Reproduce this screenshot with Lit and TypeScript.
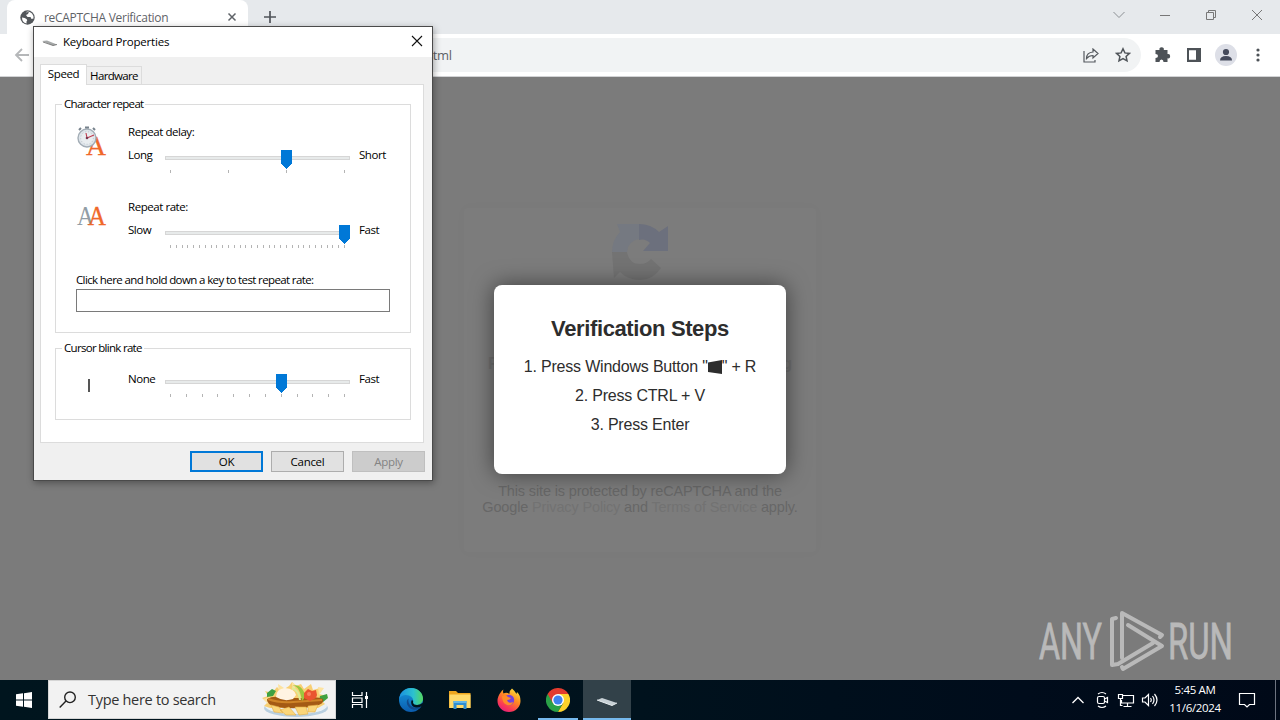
import { LitElement, html, css, svg } from "lit";
import { customElement, property } from "lit/decorators.js";

@customElement("track-slider")
class TrackSlider extends LitElement {
  @property({ type: Number }) steps = 4;
  @property({ type: Number }) value = 0;
  static styles = css`
    :host { display: block; width: 195px; height: 30px; }
    svg { display: block; }
  `;
  render() {
    const xs = Array.from({ length: this.steps }, (_, i) => 10 + Math.round((174 * i) / (this.steps - 1)));
    const t = this.value - 5;
    return html`<svg width="195" height="30" shape-rendering="crispEdges">
      <rect x="5.5" y="8.5" width="184" height="3" fill="#e7eaea" stroke="#d6d6d6"/>
      ${xs.map((x) => svg`<rect x=${x} y="22" width="1" height="3" fill="#b4b4b4"/>`)}
      <path d="M${t} 2h11v14l-5.5 5l-5.5 -5z" fill="#0078d7"/>
    </svg>`;
  }
}

@customElement("keyboard-dialog")
class KeyboardDialog extends LitElement {
  static styles = css`
    :host { display: flex; flex-direction: column; box-sizing: border-box; width: 400px; height: 455px;
      border: 1px solid #4a4a4a; background: #f0f0f0; color: #000; font: 11.5px/14px "Open Sans", sans-serif;
      letter-spacing: -0.45px; box-shadow: 1px 2px 7px rgba(0,0,0,.35); white-space: nowrap; }
    .title { display: flex; align-items: center; height: 30px; background: #fff; padding: 0 9px 0 8px; }
    .title svg { display: block; }
    .title .name { flex: 1; padding-left: 5px; letter-spacing: -0.2px; }
    .close { margin-top: -2px; }
    .tabs { display: flex; align-items: flex-end; height: 20px; margin: 8px 0 -1px 6px; z-index: 1; }
    .tab { box-sizing: border-box; border: 1px solid #dcdcdc; height: 18px; width: 55px; text-align: center; line-height: 18px; margin-bottom: 1px; border-bottom: 0; border-left: 0; letter-spacing: -0.65px; }
    .tab.on { height: 21px; width: 47px; background: #fff; line-height: 18px; margin-bottom: 0; border-left: 1px solid #dcdcdc; letter-spacing: -0.4px; }
    .panel { box-sizing: border-box; width: 384px; height: 359px; margin-left: 6px; border: 1px solid #dcdcdc; background: #fff; padding: 12px 12px 0 14px; }
    fieldset { box-sizing: border-box; width: 356px; margin: 0; padding: 0; border: 1px solid #dcdcdc; min-width: 0; }
    legend { padding: 0 2px; margin-left: 6px; height: 14px; letter-spacing: -0.7px; }
    .repeat { height: 236px; }
    .blink { height: 79px; margin-top: 8px; }
    .setting { display: grid; grid-template-columns: 52px 32px 195px 1fr; grid-template-rows: 23px 52px; padding-left: 20px; }
    .repeat .setting:first-of-type { padding-top: 14px; }
    .icon { grid-row: 1 / 3; overflow: visible; }
    .label { grid-column: 2 / 5; }
    .max { padding-left: 4px; }
    .test { padding-left: 20px; margin-top: -2px; letter-spacing: -0.62px; }
    .field { box-sizing: border-box; width: 314px; height: 23px; border: 1px solid #7a7a7a; margin-top: 2px; }
    .blink .setting { grid-template-rows: 30px; padding-top: 17px; }
    .caret { width: 2px; height: 13px; background: #555; margin: 7px 0 0 12px; }
    .buttons { display: flex; gap: 8px; margin: 8px 0 0 156px; }
    .btn { box-sizing: border-box; width: 73px; height: 21px; border: 1px solid #adadad; background: #e1e1e1; text-align: center; line-height: 20px; letter-spacing: -0.3px; }
    .btn.ok { border: 2px solid #0078d7; line-height: 18px; }
    .btn.off { background: #ccc; border-color: #bfbfbf; color: #838383; }
  `;
  render() {
    return html`
      <div class="title">
        <svg width="16" height="16"><path d="M0 7l5 -.5l10 4l-4 1z" fill="#a5a8a8"/><path d="M1 8l10 3.500l4 -1" fill="none" stroke="#666" stroke-width=".8"/></svg>
        <span class="name">Keyboard Properties</span>
        <svg class="close" width="12" height="12"><path d="M1 1l10 10M11 1L1 11" stroke="#111" stroke-width="1.1"/></svg>
      </div>
      <div class="tabs"><div class="tab on">Speed</div><div class="tab">Hardware</div></div>
      <div class="panel">
        <fieldset class="repeat">
          <legend>Character repeat</legend>
          <div class="setting">
            <svg class="icon" width="34" height="34">
              <text x="10" y="30" font-family="Liberation Serif" font-size="27" letter-spacing="0" textLength="20" lengthAdjust="spacingAndGlyphs" fill="#f0682a" stroke="#f0682a" stroke-width=".3">A</text>
              <circle cx="11" cy="13" r="9" fill="#dfe5ea" stroke="#a3adb6" stroke-width="1.4"/>
              <circle cx="11" cy="13" r="6.3" fill="#e9edf0" stroke="#b2bbc4" stroke-width=".8" stroke-dasharray="1 2"/>
              <path d="M9 2.500h4M3 5l2 -2M17 3l2 2" stroke="#77828c" stroke-width="2"/>
              <path d="M10 8l1 5l7 -3" fill="none" stroke="#c03c50" stroke-width="1.100"/><circle cx="11" cy="13" r="1.300" fill="#7a3a52"/>
            </svg>
            <div class="label">Repeat delay:</div>
            <span>Long</span><track-slider steps="4" value="126"></track-slider><span class="max">Short</span>
          </div>
          <div class="setting">
            <svg class="icon" width="34" height="34">
              <text x="1" y="25" font-family="Liberation Serif" font-size="27" letter-spacing="0" textLength="17" lengthAdjust="spacingAndGlyphs" fill="#929da5">A</text>
              <text x="12" y="25" font-family="Liberation Serif" font-size="27" letter-spacing="0" textLength="18" lengthAdjust="spacingAndGlyphs" fill="#f0682a" stroke="#f0682a" stroke-width=".3">A</text>
            </svg>
            <div class="label">Repeat rate:</div>
            <span>Slow</span><track-slider steps="31" value="184"></track-slider><span class="max">Fast</span>
          </div>
          <div class="test">
            <div>Click here and hold down a key to test repeat rate:</div>
            <div class="field"></div>
          </div>
        </fieldset>
        <fieldset class="blink">
          <legend>Cursor blink rate</legend>
          <div class="setting">
            <div><div class="caret"></div></div>
            <span>None</span><track-slider steps="12" value="121"></track-slider><span class="max">Fast</span>
          </div>
        </fieldset>
      </div>
      <div class="buttons"><div class="btn ok">OK</div><div class="btn">Cancel</div><div class="btn off">Apply</div></div>
    `;
  }
}

@customElement("task-bar")
class TaskBar extends LitElement {
  static styles = css`
    :host { display: flex; height: 40px; background: linear-gradient(90deg, #00151e, #00121d 50%, #000c1b 80%, #000918); color: #fff; font-family: "Open Sans", sans-serif; }
    svg { display: block; }
    .cell { box-sizing: border-box; width: 48px; height: 40px; display: flex; align-items: center; justify-content: center; margin-right: 1px; }
    .start { margin-right: 0; }
    .view { margin-right: 3px; }
    .running { border: solid #76b9ed; border-width: 0 0 2px; padding-top: 2px; width: 40px; margin: 0 5px 0 4px; }
    .active { border-bottom: 2px solid #76b9ed; background: #324149; padding-top: 5px; }
    .search { box-sizing: border-box; width: 288px; height: 39px; background: #f2f2f2; border: 1px solid #d5d5d5; display: flex; align-items: center; color: #333; font-size: 14.5px; padding: 0 5px 0 10px; }
    .search span { flex: 1; padding-left: 11px; letter-spacing: -0.3px; white-space: nowrap; }
    .tray { flex: 1; display: flex; justify-content: flex-end; align-items: center; }
    .tray svg { margin-right: 6px; }
    .tray .more { margin-right: 9px; }
    .tray .cam { margin-right: 7px; }
    .tray .vol { margin-right: 2px; }
    .clock { width: 68px; text-align: center; font-size: 11.5px; line-height: 18px; letter-spacing: -0.35px; white-space: nowrap; margin-right: 9px; padding-bottom: 2px; }
    .tray .note { margin-right: 19px; }
    .peek { width: 4px; height: 40px; border-left: 1px solid #6d7380; }
  `;
  render() {
    return html`
      <div class="cell start"><svg width="16" height="16" fill="#fff"><path d="M0 2.3L7 1.3V7.5H0zM8 1.2L16 0V7.5H8zM0 8.5H7V14.7L0 13.7zM8 8.5H16V16L8 14.8z"/></svg></div>
      <div class="search">
        <svg width="18" height="18" fill="none" stroke="#222" stroke-width="1.4"><circle cx="11" cy="6.3" r="5.3"/><path d="M7 10L0.7 16.5"/></svg>
        <span>Type here to search</span>
        <svg width="68" height="37" viewBox="0 0 68 37">
          <ellipse cx="34" cy="27" rx="32" ry="9" fill="#b9cfdf"/><ellipse cx="34" cy="25" rx="31" ry="8" fill="#e9f1f5"/>
          <path d="M3 10l7 2l5 -6l4 4l8 -5l3 -4l4 4l5 -2l3 5l7 -5l2 6l7 -2l-1 6l8 2l-5 5l3 3l-7 4H8L2 25l4 -4l-6 -4l6 -2z" fill="#f8cf73"/>
          <path d="M1 18l8 -2l-3 7zM16 3l6 4l-5 5zM56 6l6 1l-5 7zM30 1l5 4l-5 4z" fill="#fde3a0"/>
          <path d="M5 12l5 -4l4 2l-3 5l-6 1zM58 15l7 -2l1 4l-5 4l-4 -1z" fill="#3fa142"/>
          <path d="M5 18Q12 14 20 17L45 17Q55 15 61 18Q63 23 53 25Q35 29 14 26Q4 23 5 18z" fill="#a45a14"/>
          <path d="M6 18q10 4 25 3t29 -2" fill="none" stroke="#cf8427" stroke-width="2"/>
          <path d="M14 16q0 -8 9 -9q10 1 11 7l-3 4q-9 3 -17 -2z" fill="#fff3e2"/>
          <path d="M28 6q9 -5 12 14q4 -3 2 -9Q37 1 28 6z" fill="#9cc63e"/><path d="M30 7q7 2 8 12" fill="none" stroke="#dcec97" stroke-width="2"/>
          <path d="M42 12l4 -4l4 2l4 -1l1 5l-1 3l-6 3l-6 -3z" fill="#ea5430"/><circle cx="47" cy="13" r="2" fill="#f88160"/>
          <path d="M9 24l8 2l4 6l-9 -1zM18 29l9 -3l7 8l-10 0zM33 26l11 0l2 7l-9 1zM46 25l10 -1l-3 7l-7 0z" fill="#fbd67a" stroke="#e3ac45" stroke-width=".6"/>
        </svg>
      </div>
      <div class="cell view"><svg width="18" height="18" fill="none" stroke="#fff" stroke-width="1.2"><path d="M1.500 1v3.500h9.500v-3.500M1.500 17v-3.500h9.500v3.500M1.500 7h9.500v4.500h-9.500zM15.500 1v16"/><path d="M14 5h3v3h-3z" fill="#fff" stroke="none"/></svg></div>
      <div class="cell"><svg width="24" height="24" viewBox="0 0 24 24">
        <defs><linearGradient id="e1" x1="0" x2="1"><stop offset="0" stop-color="#1a8fe0"/><stop offset=".6" stop-color="#2cc1cf"/><stop offset="1" stop-color="#55d85e"/></linearGradient><linearGradient id="e2" x1="0" y1="0" x2="0" y2="1"><stop offset="0" stop-color="#1797dc"/><stop offset="1" stop-color="#0b5cae"/></linearGradient></defs>
        <circle cx="12" cy="12" r="12" fill="url(#e2)"/>
        <path d="M0.200 11C1 4 6 0 12 0c7 0 12 5 12 10.500c0 4 -3 6.500 -6.500 6.500c-3 0 -4 -1.300 -3.600 -2.500C15 13 14 9 10 7.500C6 6 1.500 7.500 0.200 11z" fill="url(#e1)"/>
        <path d="M9.500 10.500C6 13 8 20 14 21.500q5 1 8 -3q-4 2.300 -9 .2q-4.500 -2.700 -3.500 -8.200z" fill="#114a8b"/>
        <path d="M22.500 18.300q-3 1.700 -6.500 1q-3.500 -1 -3.800 -4.300q-.3 -2 .8 -3q1.600 1 1 2.500q.5 2.500 4 2.500q3 0 5.500 -2l1 1z" fill="#00131d"/>
      </svg></div>
      <div class="cell"><svg width="22" height="19" viewBox="0 0 22 19"><path d="M0 0h7l2 2h12.500v15H0z" fill="#eea61e"/><path d="M.5 3.500h21v13.500H.5z" fill="#ffda6b"/><path d="M4.500 10h13v8h-3v-4h-7v4h-3z" fill="#2f8ed2"/><path d="M4.500 10h13v2h-13z" fill="#63b6e6"/></svg></div>
      <div class="cell"><svg width="24" height="24" viewBox="0 0 24 24">
        <defs><linearGradient id="f1" x1=".8" y1="0" x2=".2" y2="1"><stop offset="0" stop-color="#ffe33c"/><stop offset=".4" stop-color="#ff8b22"/><stop offset=".75" stop-color="#fa3955"/><stop offset="1" stop-color="#e21a80"/></linearGradient></defs>
        <path d="M4 4q-3.500 4 -3.500 9a11.500 11 0 0 0 23 0q0 -6 -3.500 -9l-.5 2Q17 2 15 .500Q12 3 12.500 6q-3 -2 -6 -.5q-1 -2 0 -4Q4.500 2.500 4 4z" fill="url(#f1)"/>
        <circle cx="12" cy="12" r="5.200" fill="#7541dd"/><path d="M5 8q4 -2 6 1l3 1q-1 2 -4 2q1 4 6 2q-1 4 -6 3q-5 -2 -5 -9z" fill="#ff8b27"/>
      </svg></div>
      <div class="cell running"><svg width="24" height="24" viewBox="0 0 24 24">
        <path d="M12 12L1.600 6A12 12 0 0 0 12 24L17 15z" fill="#2aa147"/><path d="M12 6H22.400A12 12 0 0 1 12 24L17.200 15z" fill="#fdd22b"/><path d="M1.600 6A12 12 0 0 1 22.400 6H12L6.800 15z" fill="#e33b2e"/>
        <circle cx="12" cy="12" r="6" fill="#fff"/><circle cx="12" cy="12" r="4.600" fill="#3f82ee"/></svg></div>
      <div class="cell active"><svg width="24" height="16"><path d="M2 6l5 -2l15 5l-5 2.500z" fill="#c7d0d5"/><path d="M2 6l15 5.500l5 -2.500" fill="none" stroke="#e8eef0"/></svg></div>
      <div class="tray">
        <svg class="more" width="14" height="10" fill="none" stroke="#fff" stroke-width="1.3"><path d="M1.500 8l5.500 -5.500l5.500 5.500"/></svg>
        <svg class="cam" width="16" height="18" fill="none" stroke="#fff" stroke-width="1.200"><rect x="3.500" y="5.500" width="7" height="7" rx="1.500"/><path d="M10.500 8l3 -1.500v5l-3 -1.500M4 3q4 -3 8 0M4 15q4 3 8 0"/></svg>
        <svg width="18" height="16" fill="none" stroke="#fff" stroke-width="1.200"><path d="M6 3.500h10.500v7.500H4.500v-3M10.500 11v3M6.500 14.500h8M1.500 2.500h4v4h-4zM3.500 6.500v7h2"/></svg>
        <svg class="vol" width="18" height="16" fill="none" stroke="#fff" stroke-width="1.200"><path d="M1.500 6h2.500l3.500 -3.500v11l-3.500 -3.500h-2.500zM9.500 6q1.500 2 0 4M11.500 4q3 4 0 8M13.500 2q5 6 0 12"/></svg>
        <div class="clock">5:45 AM<br>11/6/2024</div>
        <svg class="note" width="18" height="18" fill="none" stroke="#fff" stroke-width="1.200"><path d="M1.500 2.500h15v11h-5l-2.500 2.500l-2.500 -2.500h-5z"/></svg>
        <div class="peek"></div>
      </div>
    `;
  }
}

@customElement("app-root")
class AppRoot extends LitElement {
  static styles = css`
    :host { display: block; position: relative; width: 1280px; height: 720px; overflow: hidden; font-family: "Liberation Sans", sans-serif; }
    .desktop { display: flex; flex-direction: column; height: 720px; }
    svg { display: block; }
    .strip { display: flex; height: 34px; background: #e6e9ec; align-items: center; color: #5f6368; }
    .tab { box-sizing: border-box; width: 241px; height: 34px; margin-left: 7px; border-radius: 8px 8px 0 0; background: #fff; display: flex; align-items: center; padding: 0 11px 0 13px; font: 12px "Open Sans", sans-serif; letter-spacing: -0.3px; }
    .tab span { flex: 1; padding-left: 9px; }
    .plus { margin-left: 16px; flex: 1; }
    .win { width: 46px; display: flex; justify-content: center; padding-bottom: 5px; }
    .toolbar { box-sizing: border-box; height: 43px; background: #fff; border-bottom: 1px solid #d2d3d5; display: flex; align-items: center; padding: 0 15px 0 14px; color: #4d5257; }
    .omni { flex: 1; height: 34px; border-radius: 17px; margin: 0 13px 0 70px; background: #f1f3f4; display: flex; align-items: center; gap: 16px; padding-right: 10px; color: #5f6368; }
    .url { flex: 1; padding-left: 325px; font: 13px "Open Sans", sans-serif; letter-spacing: -0.3px; }
    .actions { display: flex; align-items: center; gap: 14px; }
    .actions svg + svg { margin-left: 1px; }
    .actions .dots { margin-left: 0; }
    .actions .face { margin-left: -1px; }
    .page { flex: 1; background: #7b7b7b; display: flex; align-items: flex-start; justify-content: center; }
    .card { box-sizing: border-box; width: 352px; height: 344px; margin-top: 131px; background: #7c7c7c; box-shadow: 0 0 12px rgba(0,0,0,.025); display: flex; flex-direction: column; align-items: center; padding-top: 15px; border-radius: 3px; }
    .logo { margin-bottom: 74px; }
    .hidden { font-size: 16px; font-weight: bold; color: #717171; width: 304px; display: flex; justify-content: space-between; height: 128px; }
    .legal { font-size: 14.5px; line-height: 16px; color: #676767; text-align: center; white-space: nowrap; letter-spacing: -0.15px; }
    .legal b { font-weight: normal; color: #727272; }
    .modal { position: absolute; box-sizing: border-box; left: 494px; top: 285px; width: 292px; height: 188.500px; border-radius: 8px; background: #fff; color: #2d2d2d; box-shadow: 0 0 22px rgba(0,0,0,.5); text-align: center; padding-top: 30px; white-space: nowrap; }
    .modal h2 { margin: 0 0 16px; font-size: 22px; line-height: 27px; letter-spacing: -0.38px; }
    .step { font-size: 16px; line-height: 18px; margin-bottom: 11px; display: flex; justify-content: center; align-items: center; white-space: pre; letter-spacing: -0.2px; }
    .mark { position: absolute; left: 1035px; top: 606px; }
    keyboard-dialog { position: absolute; left: 33px; top: 26px; }
  `;
  render() {
    return html`
      <div class="desktop">
        <div class="strip">
          <div class="tab">
            <svg width="15" height="15" viewBox="0 0 15 15"><circle cx="7.500" cy="7.500" r="7.200" fill="#53575b"/><path d="M2 7.500q3 0 4.500 1.500q1.500 1 0 2.500v2Q2 12.500 2 7.500zM6 2.500l3 -.8l-1 2.300l-2 1l1.500 2h3l1 2l2 -.5q.3 -3 -1.500 -5q-2 -2 -5 -2z" fill="#fff"/></svg>
            <span>reCAPTCHA Verification</span>
            <svg width="10" height="10"><path d="M1.500 1.500l7 7M8.500 1.500l-7 7" stroke="#5f6368" stroke-width="1.500"/></svg>
          </div>
          <div class="plus"><svg width="12" height="12"><path d="M6 0v12M0 6h12" stroke="#50545a" stroke-width="1.700"/></svg></div>
          <div class="win"><svg width="12" height="8" fill="none" stroke="#8b8f93"><path d="M.5 1l5.500 5.500l5.500 -5.500"/></svg></div>
          <div class="win"><svg width="10" height="2"><path d="M0 1.500h10" stroke="#777"/></svg></div>
          <div class="win"><svg width="12" height="12" fill="none" stroke="#777"><path d="M1.500 3.500h7v7h-7zM3.500 3v-1.500h7v7h-1.500"/></svg></div>
          <div class="win"><svg width="12" height="12"><path d="M1 1l10 10M11 1L1 11" stroke="#777"/></svg></div>
        </div>
        <div class="toolbar">
          <svg width="16" height="14" fill="none" stroke="#b5b7b9" stroke-width="1.800"><path d="M15 7H2M8 1L2 7l6 6"/></svg>
          <div class="omni">
            <span class="url">html</span>
            <svg width="16" height="15" fill="none" stroke="#55595e" stroke-width="1.200"><path d="M1 3v11h11v-2M3.500 10.500q0 -6 6.500 -6.500v-3l5 4.500l-5 4.500v-2.500q-4 0 -6.500 3z"/></svg>
            <svg width="16" height="16" fill="none" stroke="#50555a" stroke-width="1.500"><path d="M8 1.800l1.900 4.100l4.500 .5l-3.300 3l.9 4.400L8 11.500l-4 2.300l.9 -4.400l-3.300 -3l4.500 -.5z"/></svg>
          </div>
          <div class="actions">
            <svg width="17" height="16" fill="#4d5257"><path d="M1.500 3h4a2.200 2.200 0 1 1 4.300 0h3.700v4a2.200 2.200 0 1 1 0 4.300v3.700h-4q0 -2.500 -2 -2.500t-2 2.500h-4v-4q2.500 0 2.500 -2t-2.500 -2z"/></svg>
            <svg width="16" height="16"><path d="M1 1h14v14H1zM3 3.200v9.600h7v-9.600z" fill="#4d5257" fill-rule="evenodd"/></svg>
            <svg class="face" width="22" height="22"><circle cx="11" cy="11" r="11" fill="#dddfe7"/><circle cx="11" cy="8" r="3.100" fill="#454a5c"/><path d="M5 16.500q0 -4.500 6 -4.500t6 4.500z" fill="#454a5c"/></svg>
            <svg class="dots" width="14" height="16" fill="#4d5257"><circle cx="7" cy="3" r="1.600"/><circle cx="7" cy="8" r="1.600"/><circle cx="7" cy="13" r="1.600"/></svg>
          </div>
        </div>
        <div class="page">
          <div class="card">
            <svg class="logo" width="58" height="58" viewBox="0 0 58 58">
              <path d="M6 1H28V16Q17 18 16 29H1Q1 17 9 9z" fill="#757981"/>
              <path d="M28 1Q40 1 48 9L57 3V28H32L39 20Q34 15 28 17z" fill="#6c707d"/>
              <path d="M1 29H16Q18 41 29 41Q36 41 40 36L50 45Q42 57 29 57Q17 57 9 49L3 55z" fill="#737373"/>
            </svg>
            <div class="hidden"><span>R</span><span>g</span></div>
            <div class="legal">This site is protected by reCAPTCHA and the<br>Google <b>Privacy Policy</b> and <b>Terms of Service</b> apply.</div>
          </div>
        </div>
        <task-bar></task-bar>
      </div>
      <div class="modal">
        <h2>Verification Steps</h2>
        <div class="step">1. Press Windows Button "<svg width="14" height="14"><path d="M0 2.500L14 0V14L0 12z" fill="#2d2d2d"/></svg>" + R</div>
        <div class="step">2. Press CTRL + V</div>
        <div class="step">3. Press Enter</div>
      </div>
      <svg class="mark" width="210" height="70" fill="#b9b9b9" stroke="#b9b9b9" stroke-width=".8" font-family="Roboto" font-size="50">
        <text x="4" y="53" textLength="63" lengthAdjust="spacingAndGlyphs">ANY</text>
        <text x="133" y="53" textLength="65" lengthAdjust="spacingAndGlyphs">RUN</text>
        <g fill="none" stroke-width="4" stroke-linejoin="round" stroke-linecap="round"><path d="M81 12L77 13V59L83 58L118 37"/><path d="M87 52V7L127 29L125 31"/><path d="M93 19L127 40L88 63L87 61"/></g>
      </svg>
      <keyboard-dialog></keyboard-dialog>
    `;
  }
}
